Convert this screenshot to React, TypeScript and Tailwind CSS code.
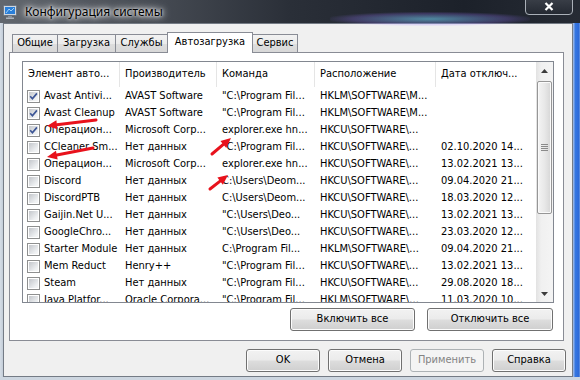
import React from "react";

type Row = [boolean, string, string, string, string, string];

const rows: Row[] = [
  [true, "Avast Antivi...", "AVAST Software", "\"C:\\Program Fil...", "HKLM\\SOFTWARE\\M...", ""],
  [true, "Avast Cleanup", "AVAST Software", "\"C:\\Program Fil...", "HKLM\\SOFTWARE\\M...", ""],
  [true, "Операцион...", "Microsoft Corp...", "explorer.exe hn...", "HKCU\\SOFTWARE\\...", ""],
  [false, "CCleaner Sm...", "Нет данных", "\"C:\\Program Fil...", "HKCU\\SOFTWARE\\...", "02.10.2020 14..."],
  [false, "Операцион...", "Microsoft Corp...", "explorer.exe hn...", "HKCU\\SOFTWARE\\...", "13.02.2021 13..."],
  [false, "Discord", "Нет данных", "C:\\Users\\Deom...", "HKCU\\SOFTWARE\\...", "09.04.2020 21..."],
  [false, "DiscordPTB", "Нет данных", "C:\\Users\\Deom...", "HKCU\\SOFTWARE\\...", "18.03.2020 12..."],
  [false, "Gaijin.Net U...", "Нет данных", "\"C:\\Users\\Deo...", "HKCU\\SOFTWARE\\...", "13.02.2021 13..."],
  [false, "GoogleChro...", "Нет данных", "\"C:\\Users\\Deo...", "HKCU\\SOFTWARE\\...", "23.03.2020 12..."],
  [false, "Starter Module", "Нет данных", "C:\\Program Fil...", "HKLM\\SOFTWARE\\...", "09.04.2020 21..."],
  [false, "Mem Reduct", "Henry++", "\"C:\\Program Fil...", "HKCU\\SOFTWARE\\...", "13.02.2021 13..."],
  [false, "Steam", "Нет данных", "\"C:\\Program Fil...", "HKCU\\SOFTWARE\\...", "29.08.2020 18..."],
  [false, "Java Platfor...", "Oracle Corpora...", "\"C:\\Program Fil...", "HKLM\\SOFTWARE\\...", "11.03.2020 10..."],
];

function CheckBox({ checked }: { checked: boolean }) {
  return (
    <div className="w-[13px] h-[13px] shrink-0 border border-[#8e8f8f] bg-white p-px">
      <div className="relative w-[9px] h-[9px] bg-[linear-gradient(135deg,#c3c6cb,#eef0f2_75%,#f8f8f8)]">
        {checked && (
          <svg className="absolute left-0 top-0" width="9" height="9" viewBox="0 0 9 9">
            <path d="M1.2 4.3 L3.4 6.7 L7.9 1.4" stroke="#3c5596" strokeWidth="1.7" fill="none" />
          </svg>
        )}
      </div>
    </div>
  );
}

function Btn({ label, w, disabled }: { label: string; w: string; disabled?: boolean }) {
  return (
    <div
      className={
        disabled
          ? `${w} h-[23px] rounded-[3px] border border-[#adb2b5] bg-[#f4f4f4] flex items-center justify-center text-[#838383]`
          : `${w} h-[23px] rounded-[3px] border border-[#707070] bg-[linear-gradient(to_bottom,#f2f2f2,#ebebeb_48%,#dddddd_52%,#cfcfcf)] shadow-[inset_0_0_0_1px_#fcfcfc] flex items-center justify-center text-black`
      }
    >
      {label}
    </div>
  );
}

function arrowPoly(tx: number, ty: number, hx: number, hy: number) {
  const dx = hx - tx;
  const dy = hy - ty;
  const len = Math.hypot(dx, dy);
  const ux = dx / len;
  const uy = dy / len;
  const px = -uy;
  const py = ux;
  const headL = 10;
  const headW = 4.5;
  const bx = hx - ux * headL;
  const by = hy - uy * headL;
  return {
    line: `M${tx} ${ty} L${bx} ${by}`,
    head: `${hx},${hy} ${bx + px * headW},${by + py * headW} ${bx - px * headW},${by - py * headW}`,
  };
}

const arrows = [
  arrowPoly(96, 120, 47, 126),
  arrowPoly(93, 148, 47, 157),
  arrowPoly(212, 154, 231, 138),
  arrowPoly(210, 189, 228, 175),
];

const cols = ["w-[97px]", "w-[97px]", "w-[98px]", "w-[121px]", "w-[100px]"];

export default function App() {
  const ui = "font-['DejaVu_Sans_Condensed','DejaVu_Sans',sans-serif] text-[11px]";
  return (
    <div className={`relative w-[580px] h-[380px] overflow-hidden bg-[#cdd6e0] ${ui}`}>
      {/* title bar */}
      <div className="relative h-[23px] bg-[linear-gradient(to_right,#62676e,#484d55_25%,#2a2f38_50%,#1c212a_80%,#262b34)] flex items-center">
        <div className="absolute left-[330px] top-[12px] w-[200px] h-[14px] rounded-full bg-[radial-gradient(ellipse_at_center,rgba(120,220,255,0.55),rgba(150,120,255,0.25)_55%,rgba(0,0,0,0)_75%)]" />
        <svg className="ml-[3px] shrink-0" width="14" height="14" viewBox="0 0 14 14">
          <rect x="0.5" y="0.5" width="13" height="10" rx="1" fill="#cfd6de" stroke="#6b7480" />
          <rect x="2" y="2" width="10" height="7" fill="#2a7fd9" />
          <path d="M3 8 L6 4 L8 6 L11 3" stroke="#bfe6ff" strokeWidth="0.8" fill="none" />
          <rect x="5" y="11" width="4" height="1.5" fill="#8a929c" />
          <rect x="3" y="12.5" width="8" height="1.5" fill="#aab2bb" />
        </svg>
        <span className="relative ml-[8px] font-['Noto_Sans',sans-serif] text-[12px] text-black [text-shadow:0_0_6px_#ffffff,0_0_10px_#ffffff,0_0_3px_#ffffff]">
          Конфигурация системы
        </span>
        <div className="absolute left-[525px] top-[-2px] w-[48px] h-[17px] rounded-b-[4px] border border-[#aab0b8] bg-[linear-gradient(to_bottom,#3a3f48,#242932)] flex items-center justify-center">
          <svg width="10" height="9" viewBox="0 0 10 9">
            <path d="M1.5 1 L8.5 8 M8.5 1 L1.5 8" stroke="#ffffff" strokeWidth="2.2" />
          </svg>
        </div>
      </div>

      <div className="flex h-[354px]">
        <div className="w-[3px] bg-[linear-gradient(to_right,#d5dde6,#c3cdd8)]" />
        {/* body */}
        <div className="w-[570px] h-[354px] border border-[#747b85] bg-[#f0f0f0] flex flex-col">
          {/* tabs */}
          <div className="flex items-end h-[20px] mt-[8px] ml-[8px]">
            {[
              ["Общие", "w-[46px]"],
              ["Загрузка", "w-[59px]"],
              ["Службы", "w-[53px]"],
            ].map(([t, w], i) => (
              <div
                key={t}
                className={`${w} ${i > 0 ? "-ml-px" : ""} h-[18px] border border-b-0 border-[#898c95] bg-[linear-gradient(to_bottom,#f2f2f2,#ebebeb_50%,#dddddd_51%,#d8d8d8)] flex items-center justify-center`}
              >
                {t}
              </div>
            ))}
            <div className="-ml-px relative z-10 w-[86px] h-[21px] -mb-px border border-b-0 border-[#898c95] bg-white flex items-center justify-center pb-[2px]">
              Автозагрузка
            </div>
            <div className="-ml-px w-[46px] h-[18px] border border-b-0 border-[#898c95] bg-[linear-gradient(to_bottom,#f2f2f2,#ebebeb_50%,#dddddd_51%,#d8d8d8)] flex items-center justify-center">
              Сервис
            </div>
          </div>
          {/* panel */}
          <div className="ml-[5px] w-[555px] h-[289px] border border-[#898c95] bg-white flex flex-col">
            {/* list */}
            <div className="ml-[12px] mt-[8px] w-[532px] h-[242px] border border-[#828790] bg-white flex overflow-hidden">
              <div className="w-[513px] flex flex-col">
                <div className="h-[26px] shrink-0 flex border-b border-white">
                  {["Элемент авто...", "Производитель", "Команда", "Расположение", "Дата отключ..."].map((h, i) => (
                    <div
                      key={h}
                      className={`${cols[i]} h-full flex items-center pl-[5px] text-black whitespace-nowrap overflow-hidden ${i < 4 ? "border-r border-[#e5e5e5]" : ""}`}
                    >
                      {h}
                    </div>
                  ))}
                </div>
                {rows.map((r, ri) => (
                  <div key={ri} className="h-[17px] shrink-0 flex items-center text-black">
                    <div className={`${cols[0]} flex items-center pl-[4px] gap-[4px] whitespace-nowrap overflow-hidden`}>
                      <CheckBox checked={r[0]} />
                      <span>{r[1]}</span>
                    </div>
                    {[r[2], r[3], r[4], r[5]].map((c, ci) => (
                      <div key={ci} className={`${cols[ci + 1]} pl-[5px] whitespace-nowrap overflow-hidden`}>
                        {c}
                      </div>
                    ))}
                  </div>
                ))}
              </div>
              {/* scrollbar */}
              <div className="w-[17px] h-full flex flex-col bg-[linear-gradient(to_right,#e2e2e2,#f0f0f0_30%,#f4f4f4)]">
                <div className="h-[17px] flex items-center justify-center shrink-0">
                  <svg width="7" height="4" viewBox="0 0 7 4">
                    <path d="M0 4 L3.5 0 L7 4 Z" fill="#3c3c3c" />
                  </svg>
                </div>
                <div className="mt-[2px] mx-px h-[133px] rounded-[2px] border border-[#969696] bg-[linear-gradient(to_right,#f4f4f4,#e8e8e8_50%,#d6d6d6)] shadow-[inset_0_0_0_1px_#fafafa] flex flex-col items-center justify-center gap-[1px]">
                  <div className="w-[7px] h-px bg-[#8a8a8a]" />
                  <div className="w-[7px] h-px bg-[#8a8a8a]" />
                  <div className="w-[7px] h-px bg-[#8a8a8a]" />
                  <div className="w-[7px] h-px bg-[#8a8a8a]" />
                </div>
                <div className="flex-1" />
                <div className="h-[17px] flex items-center justify-center shrink-0">
                  <svg width="7" height="4" viewBox="0 0 7 4">
                    <path d="M0 0 L3.5 4 L7 0 Z" fill="#3c3c3c" />
                  </svg>
                </div>
              </div>
            </div>
            {/* enable/disable all */}
            <div className="flex justify-end gap-[12px] mt-[5px] mr-[10px]">
              <Btn label="Включить все" w="w-[125px]" />
              <Btn label="Отключить все" w="w-[126px]" />
            </div>
          </div>
          {/* dialog buttons */}
          <div className="flex justify-end gap-[8px] mt-[8px] mr-[6px]">
            <Btn label="OK" w="w-[74px]" />
            <Btn label="Отмена" w="w-[74px]" />
            <Btn label="Применить" w="w-[74px]" disabled />
            <Btn label="Справка" w="w-[74px]" />
          </div>
        </div>
        <div className="flex-1 bg-[linear-gradient(to_right,#a9c0e4,#3476e2_35%,#2e6ad8_80%,#6d98e0)]" />
      </div>

      {/* red annotation arrows */}
      <svg className="absolute left-0 top-0 pointer-events-none" width="580" height="380" viewBox="0 0 580 380">
        {arrows.map((a, i) => (
          <g key={i}>
            <path d={a.line} stroke="#e8121c" strokeWidth="3" strokeLinecap="round" fill="none" />
            <polygon points={a.head} fill="#e8121c" />
          </g>
        ))}
      </svg>
    </div>
  );
}
